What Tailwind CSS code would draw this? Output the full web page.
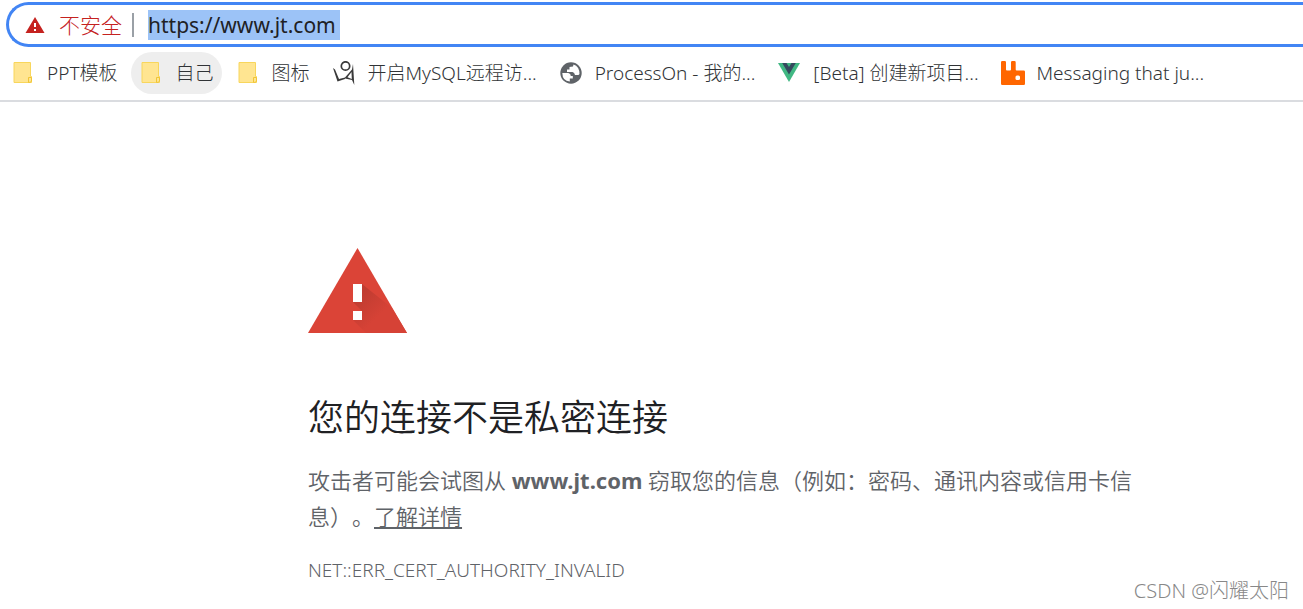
<!DOCTYPE html>
<html lang="zh-CN">
<head>
  <meta charset="UTF-8" />
  <meta name="viewport" content="width=device-width, initial-scale=1.0"/>
  <title>隐私设置错误</title>
  <script src="https://cdn.jsdelivr.net/npm/@tailwindcss/browser@4"></script>
</head>
<body class="relative min-h-screen overflow-x-hidden bg-white font-['Noto_Sans','Noto_Sans_CJK_SC',sans-serif] text-[#202124]">

  <!-- Browser toolbar -->
  <header class="border-b-2 border-[#dadce0] pt-0.5 pb-1.5">

    <!-- Address bar -->
    <div class="ml-1.5 flex h-[45px] items-center rounded-l-full border-3 border-r-0 border-[#4285f4] pl-4">
      <svg class="h-5 w-5 shrink-0" viewBox="0 0 20 20">
        <path d="M10 2L19.500 18H.5z" fill="#c5221f"/>
        <path d="M9 8h2v4H9zM9 14h2v2H9z" fill="#fff"/>
      </svg>
      <label for="address" class="ml-3.5 text-[21px] leading-8 font-light whitespace-nowrap text-[#c5221f]">不安全</label>
      <span class="mx-2.5 h-6 w-0.5 bg-[#9aa0a6]"></span>
      <input id="address" type="text" value="https://www.jt.com" class="ml-1 h-[30px] w-[192px] bg-[#9cc3f7] pt-0.5 text-[21px] outline-none" />
    </div>

    <!-- Bookmarks -->
    <nav class="mt-[5px] flex h-[42px] items-center gap-1.5 pl-[3px] text-[19px] font-light whitespace-nowrap text-[#303336]">
      <a href="#" class="flex h-full items-center gap-3 rounded-full px-2">
        <svg class="h-6 w-6 shrink-0" viewBox="0 0 24 24">
          <path d="M3 1.500h16.500v14h1v6H3z" fill="#ffe591" stroke="#f8d65c"/>
          <path d="M17.500 21.500v-5h3v3.500q0 1.500-3 1.500z" fill="#ffe591" stroke="#f0c537"/>
        </svg>
        <span>PPT模板</span>
      </a>
      <a href="#" class="flex h-full items-center gap-3 rounded-full bg-[#eee] px-2">
        <svg class="h-6 w-6 shrink-0" viewBox="0 0 24 24">
          <path d="M3 1.500h16.500v14h1v6H3z" fill="#ffe591" stroke="#f8d65c"/>
          <path d="M17.500 21.500v-5h3v3.500q0 1.500-3 1.500z" fill="#ffe591" stroke="#f0c537"/>
        </svg>
        <span>自己</span>
      </a>
      <a href="#" class="flex h-full items-center gap-3 rounded-full px-2">
        <svg class="h-6 w-6 shrink-0" viewBox="0 0 24 24">
          <path d="M3 1.500h16.500v14h1v6H3z" fill="#ffe591" stroke="#f8d65c"/>
          <path d="M17.500 21.500v-5h3v3.500q0 1.500-3 1.500z" fill="#ffe591" stroke="#f0c537"/>
        </svg>
        <span>图标</span>
      </a>
      <a href="#" class="flex h-full items-center gap-3 rounded-full px-2">
        <svg class="h-6 w-6 shrink-0" viewBox="0 0 24 24">
          <circle cx="13.500" cy="5" r="4.200" fill="none" stroke="#3a3a3a" stroke-width="1.700"/>
          <path d="M1 7l2 1.500L7 18l6-1.500v1.500L5.500 20.500z" fill="#3a3a3a"/>
          <path d="M21 3l1.300 21-2.300-5-7-1.500V16.500l7-8z" fill="#3a3a3a"/>
          <path d="M15.500 16.300l4-5.300.3 7z" fill="#fff"/>
        </svg>
        <span>开启MySQL远程访...</span>
      </a>
      <a href="#" class="flex h-full items-center gap-3 rounded-full px-2">
        <svg class="h-6 w-6 shrink-0" viewBox="0 0 24 24">
          <circle cx="12" cy="12" r="10.700" fill="#5f6368"/>
          <path d="M3.300 12h6q2.500.5 2.500 3h2v2.500h-3v3Q3.500 20 3.300 12zM14.500 3.500l-.5 2-3.500.5v2.500H8V11h5.500q2 .5 2.500 3h3.500l1-1Q20.500 5.500 14.500 3.500z" fill="#fff"/>
        </svg>
        <span>ProcessOn - 我的...</span>
      </a>
      <a href="#" class="flex h-full items-center gap-3 rounded-full px-2">
        <svg class="h-6 w-6 shrink-0" viewBox="0 0 24 24">
          <path d="M1 2h22L12 21z" fill="#41b883"/>
          <path d="M5.200 2h4.300L12 6l2.500-4h4.300L12 13.500z" fill="#35495e"/>
        </svg>
        <span>[Beta] 创建新项目...</span>
      </a>
      <a href="#" class="flex h-full items-center gap-3 rounded-full px-2">
        <svg class="h-6 w-6 shrink-0" viewBox="0 0 24 24">
          <path d="M1.200 0h2.600Q5 0 5 1.200v7.300q0 1 1 1h3q1 0 1-1V1.200Q10 0 11.200 0h2.300q1.200 0 1.200 1.200v7.300q0 1 1 1h7Q24 9.500 24 10.700v12.100q0 1.200-1.200 1.200H1.200Q0 24 0 22.800V1.200Q0 0 1.200 0z" fill="#f60"/>
          <rect x="14.500" y="14.500" width="4.500" height="4.500" rx="1.500" fill="#fff"/>
        </svg>
        <span>Messaging that ju...</span>
      </a>
    </nav>
  </header>

  <!-- Interstitial -->
  <main class="ml-[308px] max-w-[840px] pt-[145px] text-[#5f6368]">
    <svg class="h-[88px] w-[100px]" viewBox="0 0 100 88">
      <defs>
        <linearGradient id="shade" x1="50" y1="50" x2="70" y2="70" gradientUnits="userSpaceOnUse">
          <stop offset="0" stop-color="#c03c31"/>
          <stop offset="1" stop-color="#d64236"/>
        </linearGradient>
      </defs>
      <path d="M49.500 1L99 86H0z" fill="#db4437"/>
      <path d="M54 37L84 61 99 86H58L45 73l9-2V64L45 55z" fill="url(#shade)"/>
      <path d="M45 37h9v18h-9zM45 64h9v9h-9z" fill="#fff"/>
    </svg>
    <h1 class="mt-14 text-[36px] leading-[54px] font-[350] text-[#202124]">您的连接不是私密连接</h1>
    <p class="mt-[17px] text-[22px] leading-9 font-[350] [text-spacing-trim:space-all]">攻击者可能会试图从 <strong>www.jt.com</strong> 窃取您的信息（例如：密码、通讯内容或信用卡信息）。<a href="#" class="underline">了解详情</a></p>
    <p class="mt-5 text-[19px] leading-8 font-[350]">NET::ERR_CERT_AUTHORITY_INVALID</p>
  </main>

  <div class="absolute right-3.5 bottom-1 text-[20px] leading-7 font-light text-[#888]">CSDN @闪耀太阳</div>
</body>
</html>
